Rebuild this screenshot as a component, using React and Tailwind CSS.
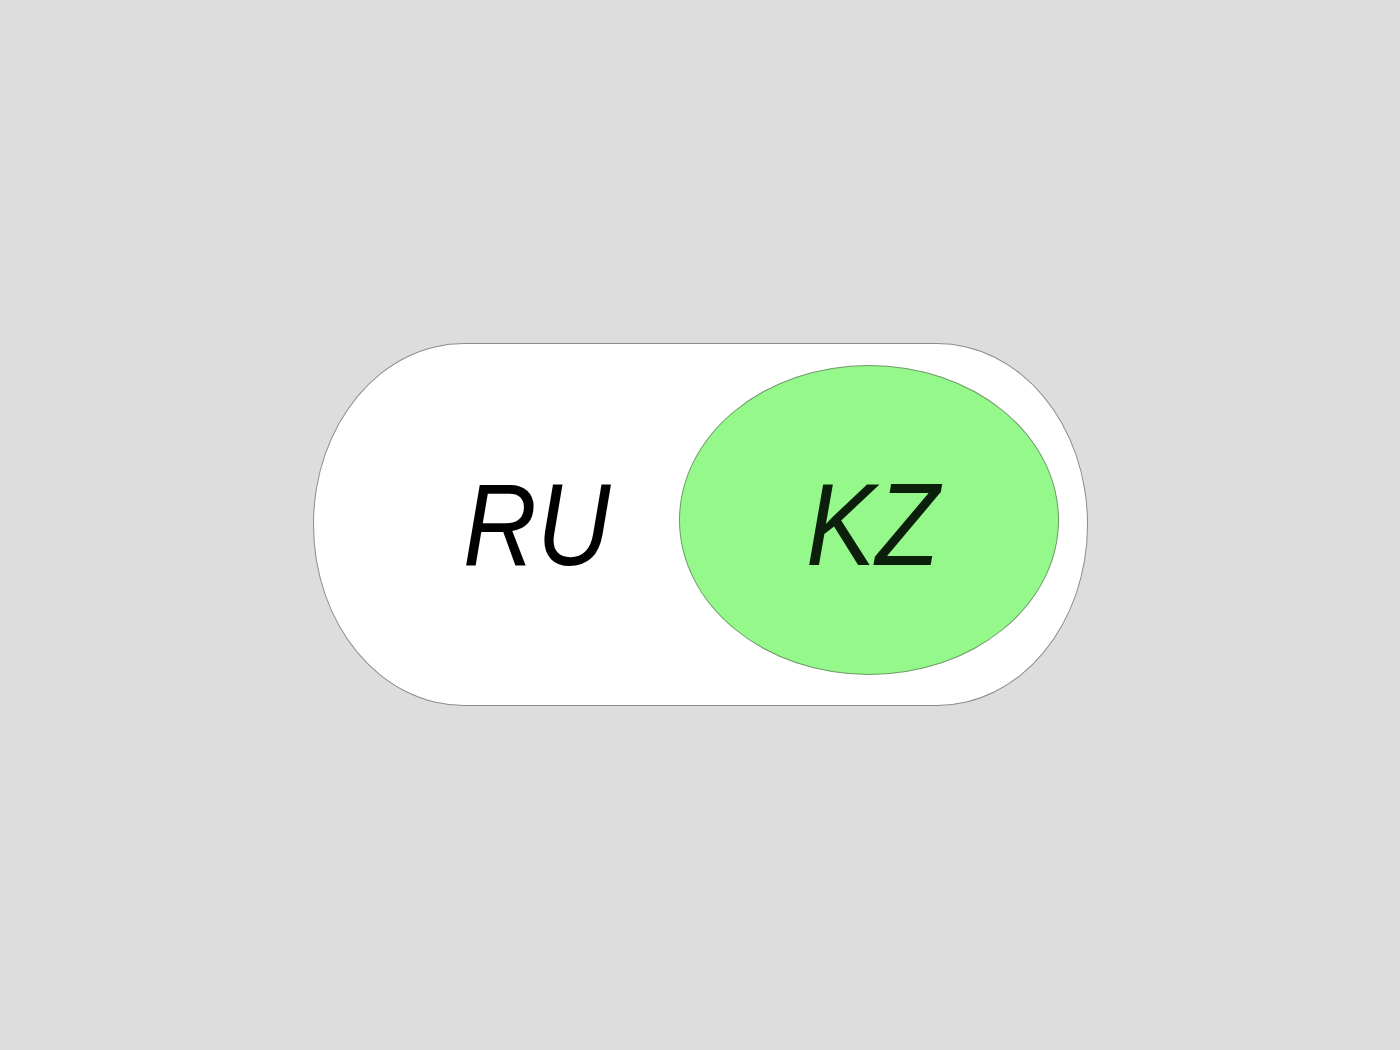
import { useState } from "react";

const LangToggle = () => {
  const [lang, setLang] = useState("KZ");

  return (
    <div className="flex h-[363px] w-[775px] items-start rounded-[151px_/_181px] border border-[#8c8c8c] bg-white">
      <button
        type="button"
        onClick={() => setLang("RU")}
        className="flex h-full flex-1 items-center justify-end pr-[58px]"
      >
        <span className="origin-center scale-x-[0.88] text-[116px] leading-none italic text-black">
          RU
        </span>
      </button>
      <button
        type="button"
        onClick={() => setLang("KZ")}
        className={`mt-[21px] mr-[28px] flex h-[310px] w-[380px] items-center justify-center rounded-[50%] border ${
          lang === "KZ" ? "border-[#6f9a6a] bg-[#94f98a]" : "border-transparent bg-white"
        }`}
      >
        <span className="origin-center scale-x-[0.9] pt-[10px] pl-[10px] text-[116px] leading-none italic text-[#0b1f0b]">
          KZ
        </span>
      </button>
    </div>
  );
};

export default function App() {
  return (
    <div
      className="flex h-[1050px] w-full items-center justify-center bg-[#dddddd]"
      style={{ fontFamily: '"Liberation Sans", Arial, sans-serif' }}
    >
      <div className="-mt-[1px]">
        <LangToggle />
      </div>
    </div>
  );
}
